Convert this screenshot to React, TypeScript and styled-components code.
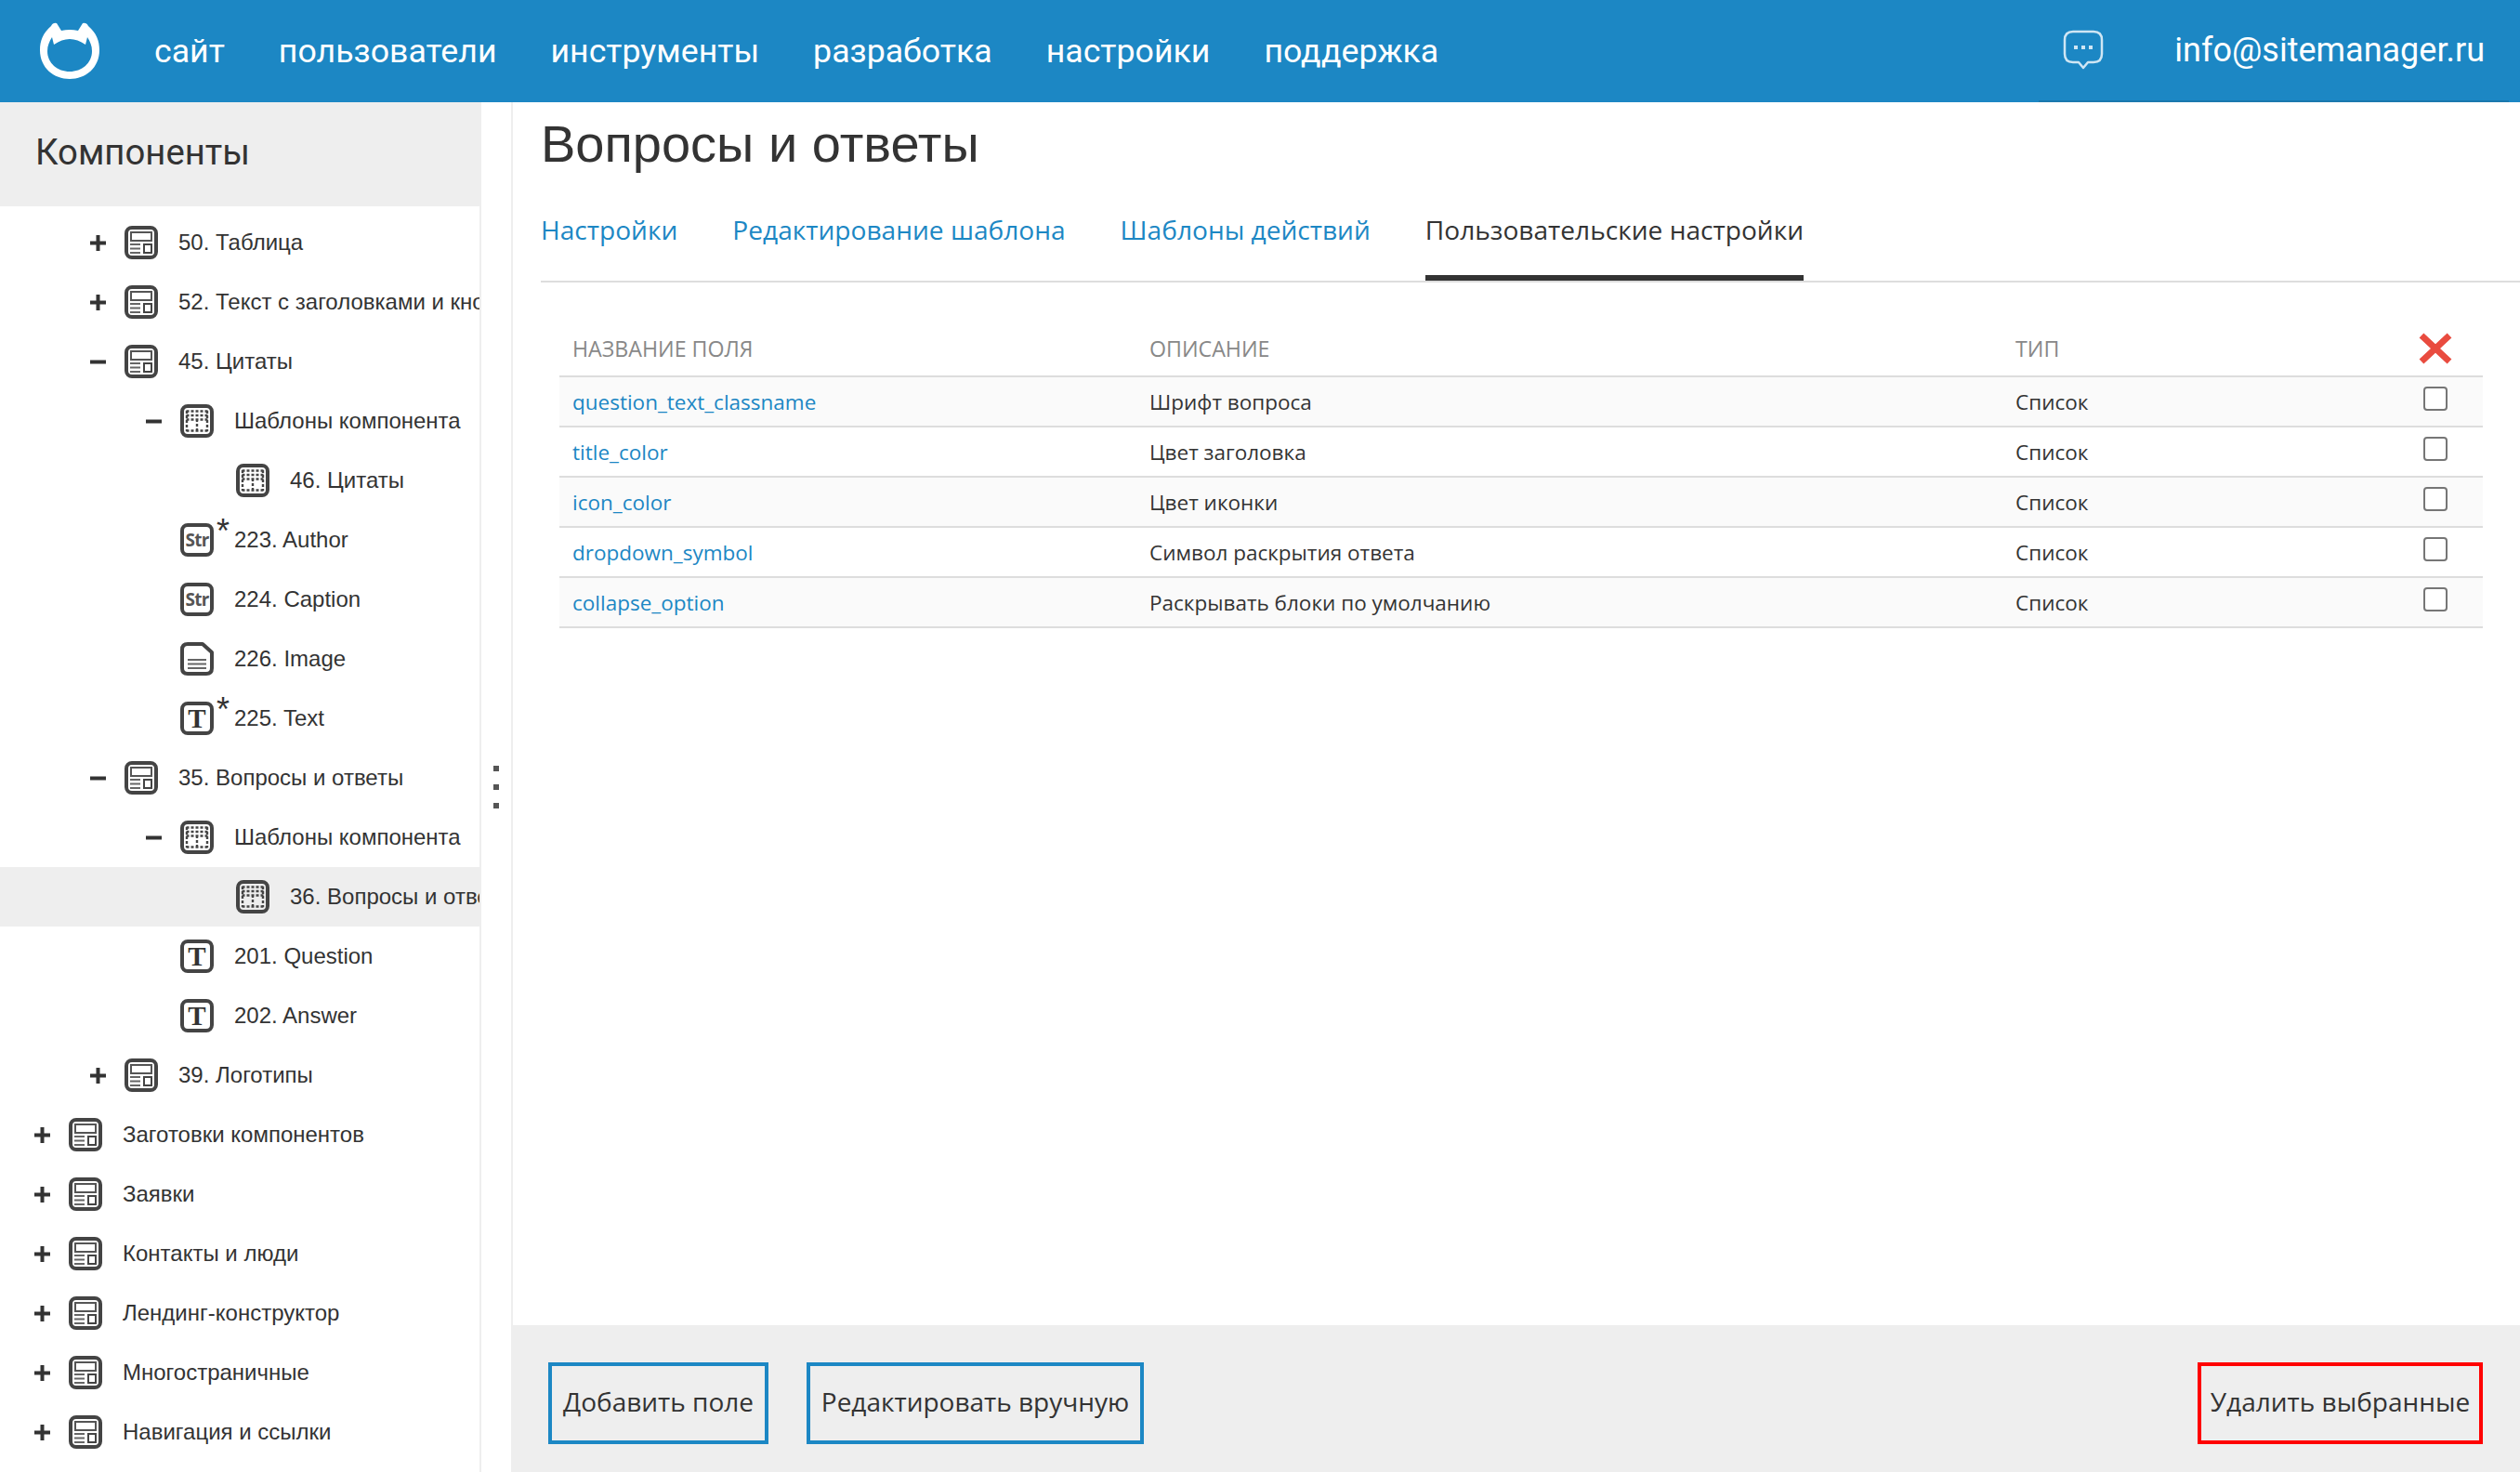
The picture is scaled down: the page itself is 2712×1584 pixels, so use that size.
import { createGlobalStyle, styled } from "styled-components";

const GlobalStyle = createGlobalStyle`
  html, body {
    margin: 0;
    padding: 0;
    background: #fff;
  }
  * {
    box-sizing: border-box;
  }
`;

const Page = styled.div`
  width: 2712px;
  height: 1584px;
  display: flex;
  flex-direction: column;
  overflow: hidden;
  color: #333;
  font-family: Roboto, "Liberation Sans", sans-serif;
`;

const Header = styled.header`
  height: 110px;
  flex: none;
  display: flex;
  align-items: center;
  background: #1c87c4;
  color: #fff;
  padding-left: 42px;
`;

const Nav = styled.nav`
  display: flex;
  gap: 58px;
  margin-left: 58px;
  font-size: 35.7px;
`;

const HeaderRight = styled.div`
  margin-left: auto;
  margin-right: 12px;
  align-self: stretch;
  display: flex;
  align-items: center;
  gap: 76px;
  padding: 0 26px;
  border-bottom: 2px solid #1a78ae;
  font-size: 36px;
`;

const Body = styled.div`
  flex: 1;
  min-height: 0;
  display: flex;
`;

const Sidebar = styled.aside`
  width: 518px;
  flex: none;
  border-right: 2px solid #eee;
  overflow: hidden;
`;

const SidebarTitle = styled.h2`
  height: 112px;
  margin: 0;
  display: flex;
  align-items: center;
  padding: 0 0 6px 38px;
  background: #eee;
  font-size: 38.3px;
  font-weight: 400;
`;

const Tree = styled.div`
  padding-top: 7px;
`;

const TreeRow = styled.div<{ $level: number; $active?: boolean }>`
  height: 64px;
  display: flex;
  align-items: center;
  white-space: nowrap;
  padding-left: ${(p) => 37 + p.$level * 60}px;
  background: ${(p) => (p.$active ? "#eee" : "transparent")};
  font-family: "Liberation Sans", sans-serif;
  font-size: 24px;
`;

const Toggle = styled.span`
  width: 37px;
  flex: none;
  display: flex;
`;

const IconWrap = styled.span`
  position: relative;
  width: 36px;
  height: 36px;
  flex: none;
  margin-right: 22px;
`;

const Star = styled.span`
  position: absolute;
  left: 39px;
  top: -9px;
  font-family: "Liberation Sans", sans-serif;
  font-size: 36px;
  line-height: 36px;
  color: #333;
`;

const Gutter = styled.div`
  width: 34px;
  flex: none;
  display: flex;
  flex-direction: column;
  align-items: center;
  gap: 14px;
  padding-top: 714px;
  border-right: 2px solid #eee;
`;

const Dot = styled.span`
  width: 6px;
  height: 6px;
  background: #555;
`;

const Main = styled.main`
  flex: 1;
  min-width: 0;
  display: flex;
  flex-direction: column;
`;

const Title = styled.h1`
  margin: 0;
  padding: 15px 0 0 30px;
  height: 88px;
  font-family: "Liberation Sans", sans-serif;
  font-size: 56px;
  line-height: 60px;
  font-weight: 400;
`;

const Tabs = styled.div`
  margin-left: 30px;
  height: 106px;
  display: flex;
  gap: 59px;
  border-bottom: 2px solid #ddd;
`;

const Tab = styled.a<{ $active?: boolean }>`
  height: 104px;
  padding-top: 29px;
  font-family: "Open Sans", sans-serif;
  font-size: 28.1px;
  line-height: 40px;
  color: ${(p) => (p.$active ? "#333" : "#1c87c4")};
  border-bottom: ${(p) => (p.$active ? "6px solid #333" : "none")};
`;

const Table = styled.div`
  margin: 0 40px 0 50px;
`;

const columns = "621px 932px 1fr 102px";

const HeadRow = styled.div`
  height: 102px;
  display: grid;
  grid-template-columns: ${columns};
  align-items: center;
  padding: 42px 0 0 14px;
  border-bottom: 2px solid #ddd;
  font-family: "Open Sans", sans-serif;
  font-size: 23.2px;
  color: #888;
`;

const DeleteCell = styled.span`
  display: flex;
  justify-content: center;
`;

const Row = styled.div<{ $odd: boolean }>`
  height: 54px;
  display: grid;
  grid-template-columns: ${columns};
  align-items: center;
  padding-left: 14px;
  border-bottom: 2px solid #ddd;
  background: ${(p) => (p.$odd ? "#fafafa" : "#fff")};
  font-family: "Open Sans", sans-serif;
  font-size: 22.5px;
`;

const FieldLink = styled.a`
  color: #1c87c4;
`;

const CheckCell = styled.span`
  display: flex;
  justify-content: center;
  align-self: start;
  padding-top: 10px;
`;

const Check = styled.input`
  appearance: none;
  width: 26px;
  height: 26px;
  margin: 0;
  background: #fff;
  border: 2px solid #767676;
  border-radius: 4px;
`;

const Footer = styled.footer`
  margin-top: auto;
  height: 158px;
  flex: none;
  display: flex;
  align-items: center;
  gap: 41px;
  padding: 10px 40px 0 38px;
  background: #eee;
`;

const Button = styled.button<{ $width: number; $danger?: boolean }>`
  width: ${(p) => p.$width}px;
  height: 88px;
  padding: 0 0 4px;
  background: transparent;
  border: 4px solid ${(p) => (p.$danger ? "#f00" : "#1c87c4")};
  font-family: "Open Sans", sans-serif;
  font-size: 28px;
  white-space: nowrap;
  color: #333;
  margin-left: ${(p) => (p.$danger ? "auto" : "0")};
`;

function Logo() {
  return (
    <svg width="66" height="62" viewBox="0 0 66 62">
      <path
        fill="#fff"
        fillRule="evenodd"
        d="M19 1 L24 9 Q33 7 42 9 L47 1 Q51 0 53 4 C62 12 65 20 65 30 C65 49 50 61 33 61 C16 61 1 49 1 30 C1 20 4 12 13 4 Q15 0 19 1 Z M9 31 C9 25 11 21 14 16 L16 24 Q33 12 50 24 L52 16 C55 21 57 25 57 31 C57 44 46 53 33 53 C20 53 9 44 9 31 Z"
      />
    </svg>
  );
}

function ChatIcon() {
  return (
    <svg width="44" height="44" viewBox="0 0 44 44" fill="none">
      <path
        d="M11 2 H33 Q42 2 42 11 V26 Q42 35 33 35 H27 L22 41 L17 35 H11 Q2 35 2 26 V11 Q2 2 11 2 Z"
        stroke="#cfe6f4"
        strokeWidth="2.5"
        strokeLinejoin="round"
      />
      <rect x="12" y="17" width="4" height="4" fill="#cfe6f4" />
      <rect x="20" y="17" width="4" height="4" fill="#cfe6f4" />
      <rect x="28" y="17" width="4" height="4" fill="#cfe6f4" />
    </svg>
  );
}

function PlusIcon() {
  return (
    <svg width="17" height="17" viewBox="0 0 17 17">
      <path d="M0 6.5H17V10.5H0Z M6.5 0H10.5V17H6.5Z" fill="#333" />
    </svg>
  );
}

function MinusIcon() {
  return (
    <svg width="17" height="17" viewBox="0 0 17 17">
      <path d="M0 6.5H17V10.5H0Z" fill="#333" />
    </svg>
  );
}

function Frame({ children }: { children?: React.ReactNode }) {
  return (
    <svg width="36" height="36" viewBox="0 0 36 36" fill="none">
      <rect x="2" y="2" width="32" height="32" rx="6" stroke="#444" strokeWidth="4" />
      {children}
    </svg>
  );
}

function ComponentIcon() {
  return (
    <Frame>
      <rect x="7" y="7" width="22" height="9" stroke="#555" strokeWidth="2" />
      <path d="M6 20H17M6 24.5H17M6 29H17" stroke="#666" strokeWidth="1.8" />
      <rect x="21" y="20" width="8" height="9" stroke="#444" strokeWidth="2" />
    </Frame>
  );
}

function TemplateIcon() {
  return (
    <Frame>
      <path
        d="M6.5 7.5H29.5M6.5 12H29.5M6.5 16.5H29.5M6.5 28.5H29.5M7 7V29M29 7V29M18 16V29"
        stroke="#444"
        strokeWidth="2.4"
        strokeDasharray="3 2"
      />
    </Frame>
  );
}

function StrIcon() {
  return (
    <Frame>
      <text
        x="18"
        y="24.5"
        textAnchor="middle"
        fontFamily="'Open Sans', sans-serif"
        fontWeight="700"
        fontSize="19"
        fill="#555"
        letterSpacing="-0.8"
      >
        Str
      </text>
    </Frame>
  );
}

function TextIcon() {
  return (
    <Frame>
      <text
        x="18"
        y="28"
        textAnchor="middle"
        fontFamily="'Liberation Serif', serif"
        fontWeight="700"
        fontSize="29"
        fill="#333"
      >
        T
      </text>
    </Frame>
  );
}

function FileIcon() {
  return (
    <svg width="36" height="36" viewBox="0 0 36 36" fill="none">
      <path
        d="M8 2 H24 L34 11 V28 Q34 34 28 34 H8 Q2 34 2 28 V8 Q2 2 8 2 Z"
        stroke="#444"
        strokeWidth="4"
        strokeLinejoin="round"
      />
      <path d="M8 19H28M8 23.5H28M8 28H28" stroke="#666" strokeWidth="1.8" />
    </svg>
  );
}

function CloseIcon() {
  return (
    <svg width="38" height="36" viewBox="0 0 38 36">
      <path d="M4 4L34 32M34 4L4 32" stroke="#e94b3f" strokeWidth="7" />
    </svg>
  );
}

const icons = {
  component: <ComponentIcon />,
  template: <TemplateIcon />,
  str: <StrIcon />,
  text: <TextIcon />,
  file: <FileIcon />,
};

type TreeItem = {
  label: string;
  level: number;
  icon: keyof typeof icons;
  toggle?: "plus" | "minus";
  star?: boolean;
  active?: boolean;
};

const treeItems: TreeItem[] = [
  { label: "50. Таблица", level: 1, icon: "component", toggle: "plus" },
  { label: "52. Текст с заголовками и кнопками", level: 1, icon: "component", toggle: "plus" },
  { label: "45. Цитаты", level: 1, icon: "component", toggle: "minus" },
  { label: "Шаблоны компонента", level: 2, icon: "template", toggle: "minus" },
  { label: "46. Цитаты", level: 3, icon: "template" },
  { label: "223. Author", level: 2, icon: "str", star: true },
  { label: "224. Caption", level: 2, icon: "str" },
  { label: "226. Image", level: 2, icon: "file" },
  { label: "225. Text", level: 2, icon: "text", star: true },
  { label: "35. Вопросы и ответы", level: 1, icon: "component", toggle: "minus" },
  { label: "Шаблоны компонента", level: 2, icon: "template", toggle: "minus" },
  { label: "36. Вопросы и ответы", level: 3, icon: "template", active: true },
  { label: "201. Question", level: 2, icon: "text" },
  { label: "202. Answer", level: 2, icon: "text" },
  { label: "39. Логотипы", level: 1, icon: "component", toggle: "plus" },
  { label: "Заготовки компонентов", level: 0, icon: "component", toggle: "plus" },
  { label: "Заявки", level: 0, icon: "component", toggle: "plus" },
  { label: "Контакты и люди", level: 0, icon: "component", toggle: "plus" },
  { label: "Лендинг-конструктор", level: 0, icon: "component", toggle: "plus" },
  { label: "Многостраничные", level: 0, icon: "component", toggle: "plus" },
  { label: "Навигация и ссылки", level: 0, icon: "component", toggle: "plus" },
];

const navItems = ["сайт", "пользователи", "инструменты", "разработка", "настройки", "поддержка"];

const fields = [
  { name: "question_text_classname", description: "Шрифт вопроса" },
  { name: "title_color", description: "Цвет заголовка" },
  { name: "icon_color", description: "Цвет иконки" },
  { name: "dropdown_symbol", description: "Символ раскрытия ответа" },
  { name: "collapse_option", description: "Раскрывать блоки по умолчанию" },
];

export default function App() {
  return (
    <Page>
      <GlobalStyle />
      <Header>
        <Logo />
        <Nav>
          {navItems.map((item) => (
            <span key={item}>{item}</span>
          ))}
        </Nav>
        <HeaderRight>
          <ChatIcon />
          <span>info@sitemanager.ru</span>
        </HeaderRight>
      </Header>
      <Body>
        <Sidebar>
          <SidebarTitle>Компоненты</SidebarTitle>
          <Tree>
            {treeItems.map((item, i) => (
              <TreeRow key={i} $level={item.level} $active={item.active}>
                <Toggle>
                  {item.toggle === "plus" && <PlusIcon />}
                  {item.toggle === "minus" && <MinusIcon />}
                </Toggle>
                <IconWrap>
                  {icons[item.icon]}
                  {item.star && <Star>*</Star>}
                </IconWrap>
                {item.label}
              </TreeRow>
            ))}
          </Tree>
        </Sidebar>
        <Gutter>
          <Dot />
          <Dot />
          <Dot />
        </Gutter>
        <Main>
          <Title>Вопросы и ответы</Title>
          <Tabs>
            <Tab>Настройки</Tab>
            <Tab>Редактирование шаблона</Tab>
            <Tab>Шаблоны действий</Tab>
            <Tab $active>Пользовательские настройки</Tab>
          </Tabs>
          <Table>
            <HeadRow>
              <span>НАЗВАНИЕ ПОЛЯ</span>
              <span>ОПИСАНИЕ</span>
              <span>ТИП</span>
              <DeleteCell>
                <CloseIcon />
              </DeleteCell>
            </HeadRow>
            {fields.map((field, i) => (
              <Row key={field.name} $odd={i % 2 === 0}>
                <FieldLink>{field.name}</FieldLink>
                <span>{field.description}</span>
                <span>Список</span>
                <CheckCell>
                  <Check type="checkbox" />
                </CheckCell>
              </Row>
            ))}
          </Table>
          <Footer>
            <Button $width={237}>Добавить поле</Button>
            <Button $width={363}>Редактировать вручную</Button>
            <Button $width={307} $danger>
              Удалить выбранные
            </Button>
          </Footer>
        </Main>
      </Body>
    </Page>
  );
}
